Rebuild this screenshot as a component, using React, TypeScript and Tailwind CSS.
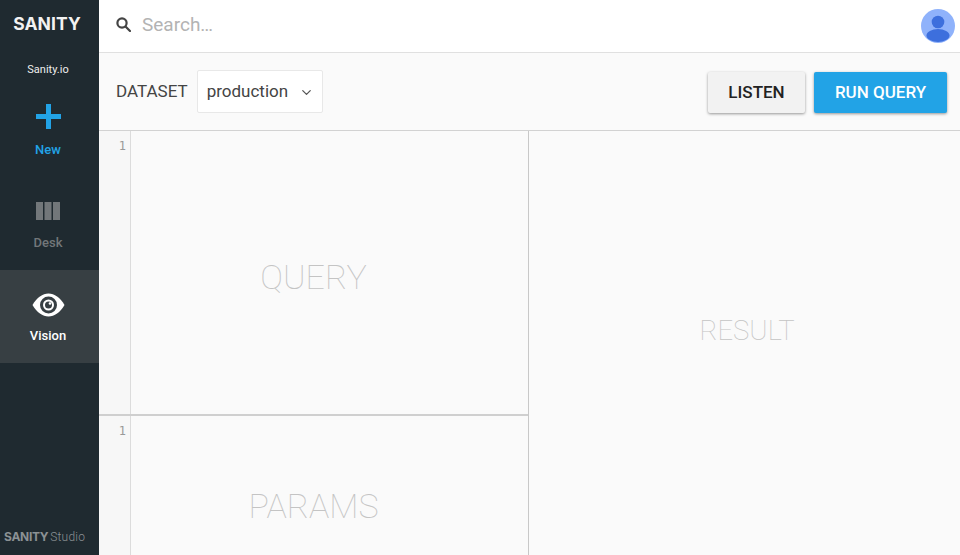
import type { ReactNode } from 'react'
import { ChevronDown } from 'lucide-react'

const NavItem = ({ icon, label, className }: { icon: ReactNode; label: string; className: string }) => (
  <div className={`h-[93px] pr-[3px] flex flex-col items-center ${className}`}>
    <div className="h-[36px] mt-[16px] flex items-center justify-center">{icon}</div>
    <span className="mt-[5px] text-[13px] leading-[18px] font-medium">{label}</span>
  </div>
)

const Gutter = () => (
  <div className="w-[32px] shrink-0 bg-[#f7f7f7] border-r border-[#dcdcdc] text-right pr-[4px] pt-[7px] text-[12px] leading-[16px] text-[#999] font-['DejaVu_Sans_Mono',monospace]">
    1
  </div>
)

export default function App() {
  return (
    <div className="w-[960px] h-[555px] overflow-hidden flex bg-[#fafafa] font-['Roboto',sans-serif]">
      <aside className="w-[99px] shrink-0 bg-[#1f2a30] flex flex-col text-white">
        <div className="h-[52px] pb-[4px] pr-[5px] flex items-center justify-center">
          <span className="text-[17.5px] font-bold tracking-[0.1px] font-['Inter',sans-serif] text-[#f2f2f2]">SANITY</span>
        </div>
        <div className="h-[32px] pt-[5px] pr-[3px] flex items-center justify-center text-[11px] text-[#eee]">Sanity.io</div>
        <NavItem
          className="text-[#22a3e6]"
          label="New"
          icon={
            <svg className="mb-[4px]" width="25" height="25" viewBox="0 0 25 25" fill="currentColor" aria-hidden>
              <rect x="10" y="0" width="5" height="25" />
              <rect x="0" y="10" width="25" height="5" />
            </svg>
          }
        />
        <NavItem
          className="text-[#72777a]"
          label="Desk"
          icon={
            <svg width="24" height="18" viewBox="0 0 24 18" fill="currentColor" aria-hidden>
              <rect x="0" y="0" width="7" height="18" />
              <rect x="8.5" y="0" width="7" height="18" />
              <rect x="17" y="0" width="7" height="18" />
            </svg>
          }
        />
        <NavItem
          className="bg-[#373f43] text-white"
          label="Vision"
          icon={
            <svg className="mt-[2px]" width="33" height="24" viewBox="0 0 33 24" aria-hidden>
              <path d="M0.5 12C5 4.5 10.5 0.5 16.5 0.5S28 4.5 32.5 12C28 19.5 22.5 23.5 16.5 23.5S5 19.5 0.5 12Z" fill="#fff" />
              <circle cx="16.5" cy="12" r="8.5" fill="#373f43" />
              <circle cx="16.5" cy="12" r="5.5" fill="#fff" />
              <circle cx="16.5" cy="12" r="3.5" fill="#373f43" />
              <circle cx="18" cy="10.5" r="1.3" fill="#fff" />
            </svg>
          }
        />
        <div className="mt-auto h-[38px] pl-[4px] pt-[1px] flex items-center text-[12px] text-[#8b9194]">
          <span className="font-bold font-['Inter',sans-serif] tracking-[-0.3px]">SANITY</span>
          <span className="ml-[2px] font-light tracking-[0.2px]">Studio</span>
        </div>
      </aside>

      <div className="flex-1 min-w-0 flex flex-col">
        <header className="h-[53px] shrink-0 bg-white border-b border-[#e0e0e0] flex items-center pl-[17px] pr-[5px]">
          <svg className="mb-[3px]" width="15" height="15" viewBox="0 0 15 15" fill="none" stroke="#444" strokeWidth="2.2" aria-hidden>
            <circle cx="6" cy="6" r="4.6" />
            <path d="M9.5 9.5L14 14" strokeLinecap="round" />
          </svg>
          <span className="ml-[11px] mb-[1px] text-[19px] text-[#b3b3b3]">Search…</span>
          <svg className="ml-auto" width="34" height="34" viewBox="0 0 34 34" aria-hidden>
            <circle cx="17" cy="17" r="17" fill="#8fb2fb" />
            <circle cx="17" cy="13" r="6.3" fill="#3d6fdd" />
            <ellipse cx="17" cy="26.5" rx="11.5" ry="6.5" fill="#3d6fdd" />
          </svg>
        </header>

        <div className="h-[78px] shrink-0 bg-[#fafafa] border-b border-[#d2d2d2] flex items-center pl-[17px] pr-[13px]">
          <span className="text-[17px] text-[#444]">DATASET</span>
          <div className="ml-[9px] w-[126px] h-[43px] bg-white border border-[#e8e8e8] rounded-[2px] flex items-center pl-[9px] text-[17px] text-[#444]">
            production
            <ChevronDown className="ml-[11px] mt-[2px] text-[#555]" size={15} />
          </div>
          <button className="ml-auto mt-[2px] w-[97px] h-[41px] bg-[#f2f2f2] rounded-[2px] shadow-[0_1px_3px_rgba(0,0,0,0.4)] text-[17px] font-medium text-[#222]">
            LISTEN
          </button>
          <button className="ml-[9px] mt-[2px] w-[133px] h-[41px] bg-[#22a3e6] rounded-[2px] shadow-[0_1px_3px_rgba(0,0,0,0.4)] text-[17px] font-medium text-white">
            RUN QUERY
          </button>
        </div>

        <div className="flex-1 min-h-0 flex">
          <div className="w-[430px] shrink-0 border-r border-[#c8c8c8] flex flex-col">
            <div className="h-[285px] shrink-0 border-b-2 border-[#cfcfcf] flex">
              <Gutter />
              <div className="flex-1 flex items-center justify-center text-[34px] font-thin text-[#c4c4c4] pt-[10px] pr-[32px]">QUERY</div>
            </div>
            <div className="flex-1 flex">
              <Gutter />
              <div className="flex-1 flex items-center justify-center text-[34px] font-thin text-[#c4c4c4] pt-[42px] pr-[32px]">PARAMS</div>
            </div>
          </div>
          <div className="flex-1 flex items-center justify-center text-[27.5px] font-thin text-[#c4c4c4] pb-[25px] pl-[5px]">RESULT</div>
        </div>
      </div>
    </div>
  )
}
